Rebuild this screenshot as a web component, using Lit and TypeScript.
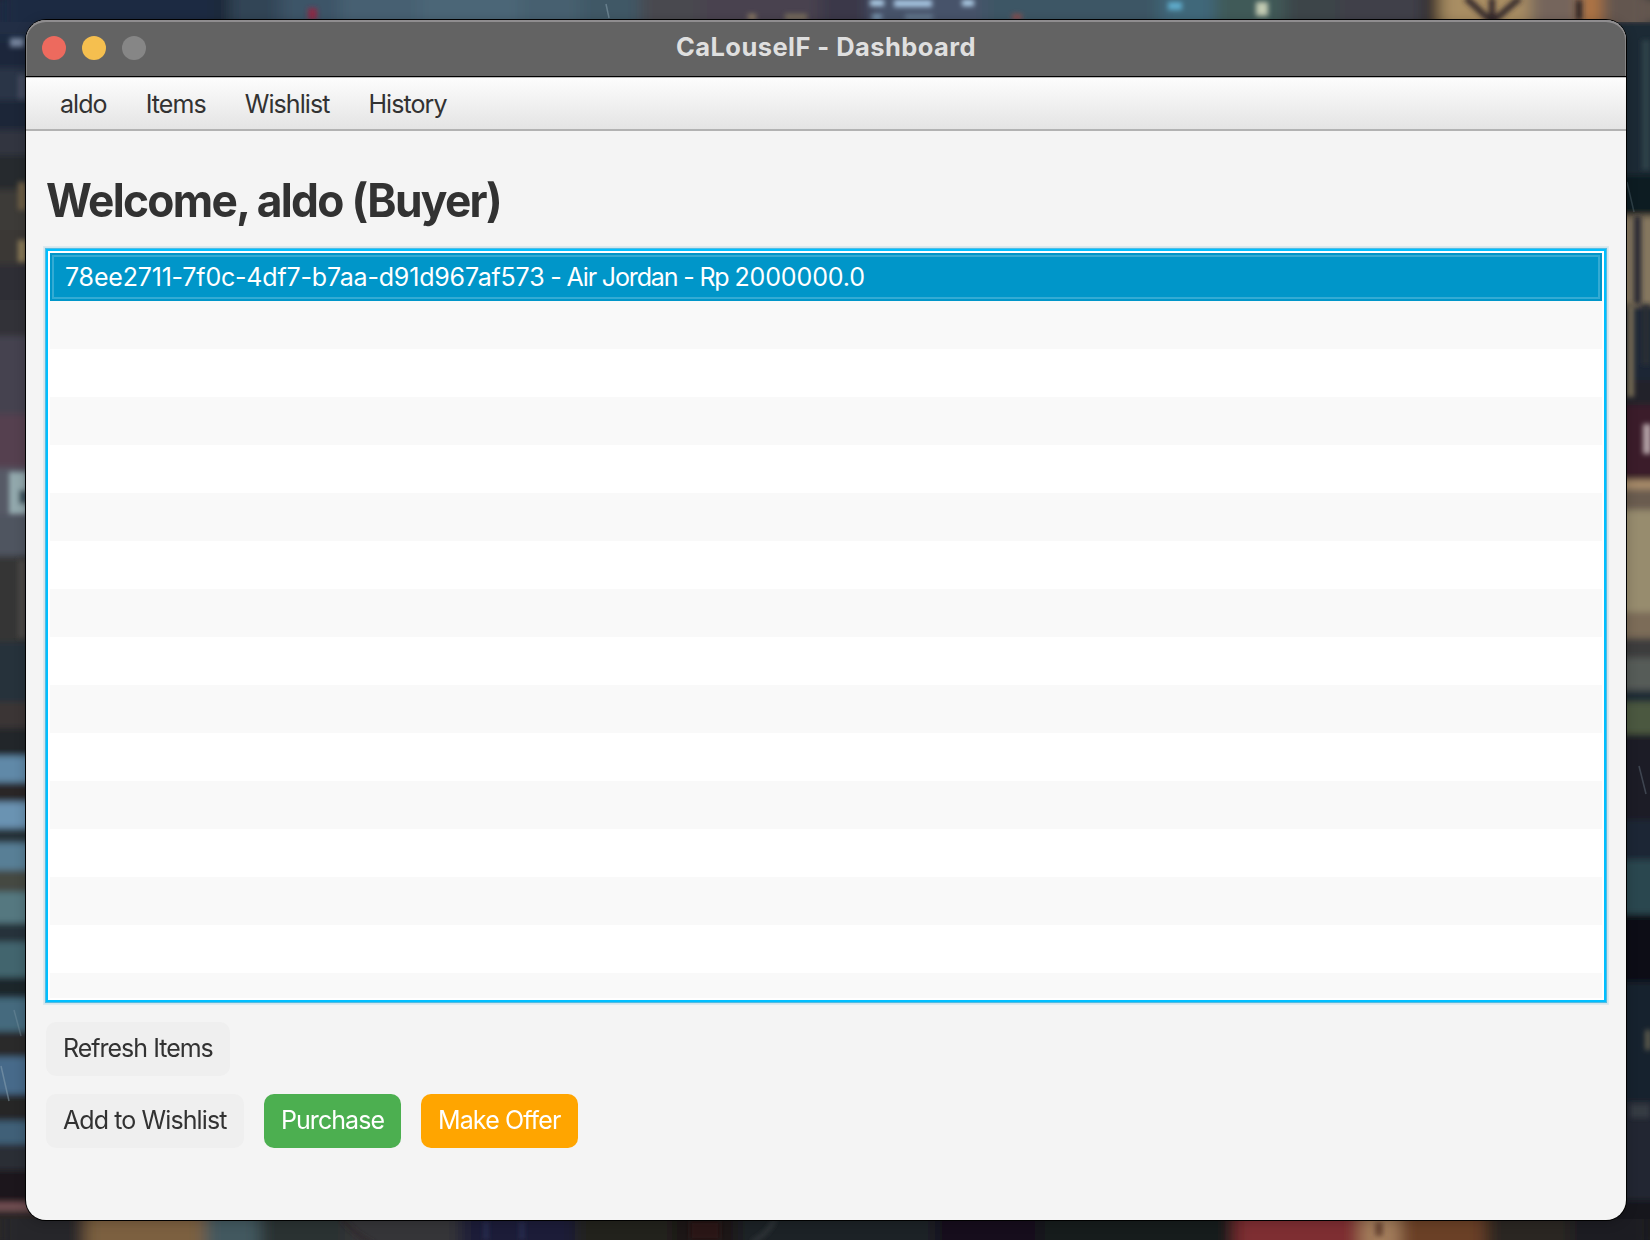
import { LitElement, html, svg, css } from "lit";
import { customElement, property, state } from "lit/decorators.js";

/** x, y, width, height, colour */
type Patch = [number, number, number, number, string];

/** Horizontal bands of the street scene: start, end, colour. */
type Band = [number, number, string];

const leftBands: Band[] = [
  [0, 20, "#1f2b42"], [20, 34, "#222d44"], [34, 43, "#1f2a40"], [43, 68, "#1e263a"], [68, 100, "#2c3546"],
  [100, 130, "#1f2638"], [130, 155, "#30353f"], [155, 190, "#272a2e"], [190, 230, "#3c3a39"],
  [230, 264, "#3a3736"], [264, 300, "#2e2f36"], [300, 336, "#313237"], [336, 414, "#45424f"],
  [414, 468, "#55404f"], [468, 514, "#565a66"], [514, 556, "#4f5560"], [556, 642, "#353534"],
  [642, 702, "#27303a"], [702, 728, "#3a3534"], [728, 756, "#20262a"], [756, 782, "#6089a8"],
  [782, 802, "#2a2528"], [802, 828, "#6a93b2"], [828, 843, "#253038"], [843, 870, "#587f96"],
  [870, 892, "#454842"], [892, 923, "#547880"], [923, 942, "#26323a"], [942, 977, "#42656e"],
  [977, 998, "#1c252b"], [998, 1031, "#456a7e"], [1031, 1057, "#2b2a2c"], [1057, 1094, "#476a8a"],
  [1094, 1121, "#262527"], [1121, 1144, "#3f6078"], [1144, 1170, "#2a2f36"], [1170, 1203, "#1c161a"],
  [1203, 1210, "#7a5558"], [1210, 1240, "#292528"],
];

const rightBands: Band[] = [
  [0, 20, "#62554f"], [20, 175, "#1b2935"], [175, 216, "#111b24"], [216, 305, "#85775f"],
  [305, 380, "#1b2835"], [380, 405, "#24202a"], [405, 480, "#3a1e2b"], [480, 489, "#a88c6a"],
  [489, 510, "#6a5c50"], [510, 612, "#978c6e"], [612, 638, "#7c6c58"], [638, 658, "#3c3d3c"],
  [658, 690, "#565c58"], [690, 702, "#1e2a36"], [702, 734, "#4b583f"], [734, 820, "#1b1e27"],
  [820, 860, "#1c2834"], [860, 914, "#2b4650"], [914, 982, "#070d18"], [982, 1100, "#19202e"],
  [1100, 1200, "#222832"], [1200, 1240, "#18191d"],
];

const topBands: Band[] = [
  [0, 219, "#1f2a42"], [219, 228, "#151d2c"], [228, 280, "#304456"], [280, 340, "#3d5467"], [340, 420, "#466072"],
  [420, 520, "#4c6677"], [520, 580, "#466070"], [580, 640, "#405866"], [640, 700, "#48484f"], [700, 820, "#484350"],
  [820, 870, "#3a3848"], [870, 985, "#46526a"], [985, 1160, "#3e5665"], [1160, 1215, "#41687a"],
  [1215, 1285, "#3f5a58"], [1285, 1340, "#3c4448"], [1340, 1425, "#40404a"], [1425, 1440, "#2a2424"],
  [1440, 1530, "#a98e64"], [1530, 1582, "#75655c"], [1582, 1600, "#b8783c"], [1600, 1650, "#64564f"],
];

const bottomBands: Band[] = [
  [0, 85, "#27262a"], [85, 205, "#7c6040"], [205, 260, "#43585e"], [260, 345, "#2a3033"],
  [345, 460, "#343438"], [460, 575, "#1b1d38"], [575, 672, "#24241f"], [672, 738, "#1d1315"],
  [738, 935, "#1d2325"], [935, 1040, "#15111a"], [1040, 1235, "#181b1e"], [1235, 1360, "#7e2e32"],
  [1360, 1400, "#a37d5c"], [1400, 1485, "#6a4026"], [1485, 1570, "#2a2524"], [1570, 1650, "#1a1d24"],
];

/** Lamps, signs and window mullions over the bands. */
const details: Patch[] = [
  [10, 38, 14, 9, "#74839c"], [18, 75, 8, 24, "#444c5e"], [18, 182, 8, 28, "#6e5f44"], [18, 240, 8, 22, "#8d7d58"],
  [9, 472, 18, 42, "#93a9ad"], [19, 490, 8, 14, "#38505a"], [18, 560, 8, 78, "#4c4a47"],
  [308, 8, 9, 12, "#8c2c44"],
  [870, 0, 14, 6, "#b4d4ee"], [894, 0, 38, 7, "#a9c8e4"], [962, 0, 12, 6, "#b4d4ee"], [872, 14, 10, 6, "#7a96b0"],
  [905, 14, 28, 6, "#64788e"], [748, 14, 8, 6, "#8f7d64"], [785, 14, 22, 6, "#7a6f5c"], [1012, 14, 10, 6, "#8a5050"],
  [1168, 2, 14, 8, "#5eaccc"], [1256, 2, 12, 14, "#c2cab2"], [1576, 0, 6, 20, "#2c2224"],
  [1634, 216, 7, 88, "#262830"], [1627, 305, 7, 92, "#7a7058"], [1642, 305, 8, 60, "#2a2e34"],
  [1643, 424, 8, 30, "#b5a4a8"], [1642, 40, 8, 130, "#2f4248"], [1645, 1030, 6, 20, "#5d5a4e"],
  [1630, 1104, 20, 14, "#353a42"], [1375, 1222, 8, 14, "#6a4634"],
  [484, 1221, 4, 19, "#2c3054"], [520, 1221, 4, 19, "#2c3054"], [690, 1221, 30, 19, "#2a1416"],
];

@customElement("street-wallpaper")
export class StreetWallpaper extends LitElement {
  static styles = css`
    :host {
      display: block;
      width: 1650px;
      height: 1240px;
    }
    svg {
      display: block;
    }
  `;

  render() {
    const across = (bands: Band[], x: number, w: number) =>
      bands.map(([a, b, c]) => svg`<rect x=${x} y=${a} width=${w} height=${b - a + 1} fill=${c} />`);
    const along = (bands: Band[], y: number, h: number) =>
      bands.map(([a, b, c]) => svg`<rect x=${a} y=${y} width=${b - a + 1} height=${h} fill=${c} />`);
    return html`
      <svg width="1650" height="1240" viewBox="0 0 1650 1240" aria-hidden="true">
        <defs>
          <filter id="vertical" x="-5%" y="-5%" width="110%" height="110%">
            <feGaussianBlur stdDeviation="0 3.2" />
          </filter>
          <filter id="horizontal" x="-5%" y="-5%" width="110%" height="110%">
            <feGaussianBlur stdDeviation="8 0" />
          </filter>
          <filter id="fine" x="-5%" y="-5%" width="110%" height="110%">
            <feGaussianBlur stdDeviation="2.4" />
          </filter>
        </defs>
        <rect width="1650" height="1240" fill="#1d222b" />
        <g filter="url(#vertical)">${across(leftBands, 0, 50)} ${across(rightBands, 1600, 50)}</g>
        <g filter="url(#horizontal)">${along(topBands, 0, 22)} ${along(bottomBands, 1219, 21)}</g>
        <g filter="url(#fine)">
          <g fill="none" stroke="#30282a" stroke-width="6">
            <path d="M1466 -2 L1492 22 L1520 -2" />
            <path d="M1492 -2 V22" />
            <path d="M342 1219 Q356 1236 374 1244" stroke-width="3" />
            <path d="M775 1219 Q768 1234 752 1242" stroke="#383c40" stroke-width="3" />
          </g>
          ${details.map(([x, y, w, h, c]) => svg`<rect x=${x} y=${y} width=${w} height=${h} fill=${c} />`)}
        </g>
        <g stroke="#8fa6b4" stroke-width="1.5" opacity="0.5">
          <path d="M606 4 L609 18" />
          <path d="M1 1066 L9 1101" />
          <path d="M14 1010 L21 1036" opacity="0.6" />
          <path d="M1627 182 L1634 212" opacity="0.5" />
          <path d="M1639 766 L1646 794" opacity="0.6" />
        </g>
      </svg>
    `;
  }
}

@customElement("title-bar")
export class TitleBar extends LitElement {
  @property() heading = "";

  static styles = css`
    :host {
      display: grid;
      grid-template-columns: 1fr auto 1fr;
      align-items: center;
      height: 56px;
      box-sizing: border-box;
      padding: 0 16px;
      background: #636363;
      border-radius: 20px 20px 0 0;
      box-shadow: inset 0 2px 0 #8f8d8f, inset 1px 0 0 #858585, inset -1px 0 0 #858585;
    }
    .lights {
      display: flex;
      gap: 16px;
    }
    .light {
      width: 24px;
      height: 24px;
      border-radius: 50%;
    }
    .close {
      background: #ed6a5e;
    }
    .minimize {
      background: #f5bf4f;
    }
    .zoom {
      background: #868686;
    }
    .heading {
      color: #dfdfdf;
      font-weight: 700;
      font-size: 25.5px;
      line-height: 32px;
      letter-spacing: 0.44px;
      padding-bottom: 3px;
    }
  `;

  render() {
    return html`
      <div class="lights">
        <span class="light close"></span>
        <span class="light minimize"></span>
        <span class="light zoom"></span>
      </div>
      <div class="heading">${this.heading}</div>
    `;
  }
}

interface Item {
  id: string;
  name: string;
  price: string;
}

@customElement("item-list")
export class ItemList extends LitElement {
  @property({ attribute: false }) items: Item[] = [];
  @property({ type: Number }) rows = 16;
  @state() private selected = 0;

  static styles = css`
    :host {
      display: block;
      box-sizing: border-box;
      height: 749px;
      padding: 2px;
      background: #fff;
      outline: 2px solid #00bfff;
      box-shadow: 0 0 0 3px #55bbe0, 0 0 0 4px #d0e6ee, 0 0 0 5px #dde9ee;
    }
    .rows {
      height: 100%;
      overflow: hidden;
      display: flex;
      flex-direction: column;
    }
    .row {
      flex: none;
      height: 48px;
      box-sizing: border-box;
      padding-left: 15px;
      line-height: 48px;
      white-space: pre;
      color: #323232;
    }
    .row:nth-child(even) {
      background: #f9f9f9;
    }
    .row.selected {
      background: #0096c9;
      color: #fff;
      box-shadow: inset 0 0 0 2px #0096c9, inset 0 0 0 4px #33abd4;
    }
    .id {
      letter-spacing: -0.19px;
    }
    .name {
      letter-spacing: -1.15px;
    }
    .price {
      letter-spacing: -0.12px;
    }
  `;

  render() {
    return html`
      <div class="rows">
        ${Array.from({ length: this.rows }, (_, i) => {
          const item = this.items[i];
          return html`<div
            class=${item && i === this.selected ? "row selected" : "row"}
            @click=${() => (this.selected = i)}
          >${item
              ? html`<span class="id">${item.id}</span><span class="name"> - ${item.name} - Rp </span><span class="price">${item.price}</span>`
              : ""}</div>`;
        })}
      </div>
    `;
  }
}

@customElement("app-root")
export class AppRoot extends LitElement {
  private menus = ["aldo", "Items", "Wishlist", "History"];
  private items: Item[] = [
    { id: "78ee2711-7f0c-4df7-b7aa-d91d967af573", name: "Air Jordan", price: "2000000.0" },
  ];

  static styles = css`
    :host {
      display: grid;
      width: 1650px;
      height: 1240px;
      overflow: hidden;
      font-family: Inter, "Liberation Sans", sans-serif;
      font-size: 25px;
      color: #323232;
    }
    street-wallpaper,
    .desktop {
      grid-area: 1 / 1;
    }
    .desktop {
      z-index: 1;
      padding: 20px 24px 20px 26px;
      display: flex;
    }
    .window {
      flex: 1;
      display: flex;
      flex-direction: column;
      background: #f4f4f4;
      border-radius: 20px;
      box-shadow: 0 0 0 1px #000, 0 2px 12px 1px rgba(0, 0, 0, 0.2);
    }
    .menubar {
      display: flex;
      gap: 39px;
      height: 55px;
      box-sizing: border-box;
      padding-left: 34px;
      border-top: 1px solid #000;
      border-bottom: 2px solid #b2b2b2;
      background: linear-gradient(#bdbdbd 0 1px, #fdfdfd 1px, #e4e4e4);
      letter-spacing: -0.93px;
      line-height: 55px;
    }
    .content {
      flex: 1;
      display: flex;
      flex-direction: column;
      padding: 41px 22px 0;
    }
    h1 {
      margin: 0 0 22px -2px;
      font-size: 46px;
      font-weight: 700;
      line-height: 57px;
      letter-spacing: -1.75px;
      transform: scaleX(0.962);
      transform-origin: left;
    }
    .actions {
      display: flex;
      gap: 20px;
      margin: 22px -2px 0;
    }
    .actions + .actions {
      margin-top: 18px;
    }
    button {
      height: 54px;
      padding: 0 0 2px 17px;
      border: 0;
      border-radius: 10px;
      font: inherit;
      text-align: left;
      letter-spacing: -0.95px;
      color: #323232;
      background: #efefef;
    }
    .refresh {
      width: 184px;
      letter-spacing: -1px;
    }
    .wishlist {
      width: 198px;
      letter-spacing: -0.9px;
    }
    .purchase {
      width: 137px;
      background: #4caf50;
      color: #fff;
    }
    .offer {
      width: 157px;
      background: #ffa500;
      color: #fff;
      letter-spacing: -0.88px;
    }
  `;

  render() {
    return html`
      <street-wallpaper></street-wallpaper>
      <div class="desktop">
        <div class="window">
          <title-bar heading="CaLouselF - Dashboard"></title-bar>
          <nav class="menubar">${this.menus.map((m) => html`<span>${m}</span>`)}</nav>
          <main class="content">
            <h1>Welcome, aldo (Buyer)</h1>
            <item-list .items=${this.items}></item-list>
            <div class="actions">
              <button class="refresh">Refresh Items</button>
            </div>
            <div class="actions">
              <button class="wishlist">Add to Wishlist</button>
              <button class="purchase">Purchase</button>
              <button class="offer">Make Offer</button>
            </div>
          </main>
        </div>
      </div>
    `;
  }
}
